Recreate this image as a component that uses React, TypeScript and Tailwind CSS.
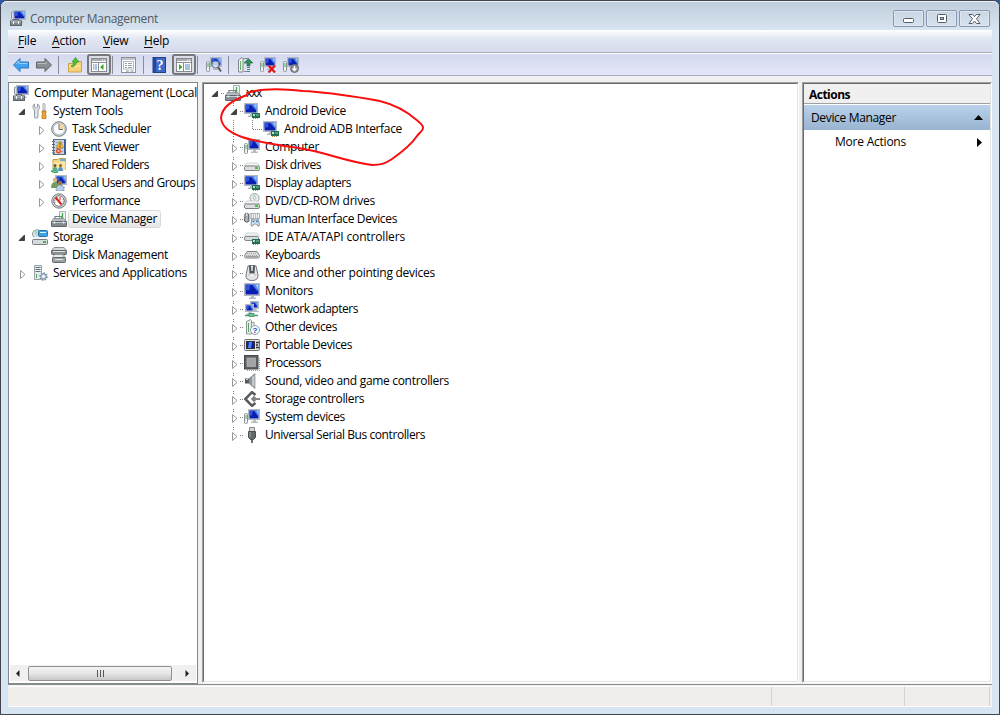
import React, { useLayoutEffect, useRef, useState } from 'react';

// Text that is letter-spaced to fill a given width
const Label = ({ text, w, className = '' }: { text: string; w: number; className?: string }) => {
  const ref = useRef<HTMLSpanElement>(null);
  const [spacing, setSpacing] = useState(0);

  useLayoutEffect(() => {
    if (!ref.current) return;
    const natural = ref.current.getBoundingClientRect().width;
    setSpacing((w - natural) / text.length);
  }, [text, w]);

  return (
    <span ref={ref} className={`whitespace-pre ${className}`} style={{ letterSpacing: spacing }}>
      {text}
    </span>
  );
};

const Svg = ({ children, size = 16 }: { children: React.ReactNode; size?: number }) => (
  <svg width={size} height={size} viewBox="0 0 16 16" className="block shrink-0">{children}</svg>
);

/* Reusable pieces */
const Screen = ({ x = 0, y = 0, w = 12, h = 9 }: { x?: number; y?: number; w?: number; h?: number }) => (
  <g>
    <rect x={x + 0.5} y={y + 0.5} width={w - 1} height={h - 1} fill="#d8dde2" stroke="#b4b9be" />
    <rect x={x + 1.5} y={y + 1.5} width={w - 3} height={h - 3} fill="#0a1fb0" />
    <path d={`M${x + 1.5} ${y + 1.5}h${w * 0.3}l-1 ${h * 0.45}h${-(w * 0.3 - 1)}z`} fill="#2c55dc" />
    <path d={`M${x + w * 0.5} ${y + 1.5}h${w * 0.5 - 1.5}v${h * 0.6}z`} fill="#4f86ee" />
    <path d={`M${x + w * 0.7} ${y + 1.5}h${w * 0.3 - 1.5}v${h * 0.4}z`} fill="#a5cdfb" />
    <path d={`M${x + w / 2 - 1} ${y + h}h3v1.500h2v1.500h-7v-1.500h2z`} fill="#b5bcc2" />
  </g>
);

const Chip = () => (
  <g>
    <rect x="8" y="10" width="8" height="5" fill="#1f6f50" />
    <rect x="9" y="11" width="2" height="2" fill="#c7ddd0" />
    <rect x="12" y="11" width="3" height="2" fill="#5d9a7c" />
    <path d="M9 15.500h6" stroke="#b98e3a" strokeDasharray="1 1" />
  </g>
);

const Tower = () => (
  <g>
    <rect x="0.500" y="4.500" width="3" height="10" rx="1" fill="#eef1f2" stroke="#8d9297" />
    <path d="M2 6v4" stroke="#43b649" />
  </g>
);

const Drive = ({ y = 7 }: { y?: number }) => (
  <g>
    <path d={`M2.500 ${y}h11l2 3H.5z`} fill="#f6f7f7" stroke="#b9bdc0" strokeWidth=".6" />
    <rect x="0.500" y={y + 3} width="15" height="4.500" rx="1.500" fill="#dcdee0" stroke="#7d8286" />
    <rect x="11" y={y + 4} width="3" height="2" fill="#38c938" />
  </g>
);

const Toolbox = () => (
  <Svg>
    <path d="M8.500.5h6v9h-6z" fill="#f5f6f7" stroke="#a7adb2" />
    <path d="M11.500 2v5" stroke="#47b349" strokeWidth="1.400" />
    <path d="M4 8V5.500h6.500V8" fill="none" stroke="#777e85" strokeWidth="1.200" />
    <path d="M2.500 7.500h10.500l2.500 3H.5z" fill="#b5bbc0" stroke="#7c848a" strokeWidth=".7" />
    <rect x="0.500" y="10.500" width="15" height="5" rx=".5" fill="#838c94" stroke="#5f676e" />
    <path d="M1 11.500h14" stroke="#c5cbd0" />
    <path d="M3.500 10.500v2M12.500 10.500v2" stroke="#e6eaec" strokeWidth="1.500" />
  </Svg>
);

const Mgmt = () => (
  <Svg>
    <path d="M1.500 9V2.500l2-1V10z" fill="#dfe3e6" stroke="#8d949b" />
    <Screen x={3} y={0} w={13} h={10} />
    <path d="M3.500 11V9.500h5V11" fill="none" stroke="#5d646b" />
    <rect x="0.500" y="11" width="11" height="4.500" fill="#7d858c" stroke="#5d646b" />
    <path d="M1 12h10" stroke="#c6ccd1" />
    <path d="M3.500 11v3M8.500 11v3" stroke="#f0f2f4" />
  </Svg>
);

const Tools = () => (
  <Svg>
    <path d="M2.500 1v3l1.500 1.500L5.500 4V1c3 1.500 2.500 5 .5 6v7.500q-2 1.500-3.500 0V7C.5 5 .5 2 2.500 1z" fill="#e4e7e9" stroke="#7d858c" strokeWidth=".8" />
    <path d="M11.500 0l1.500 1v7h-2V1z" fill="#eceeef" stroke="#8a9197" strokeWidth=".7" />
    <path d="M10 8h4v2l-.7 1 .7 1v3.500h-4V12l.7-1-.7-1z" fill="#eca533" stroke="#b8690c" strokeWidth=".7" />
  </Svg>
);

const Clock = () => (
  <Svg>
    <circle cx="8" cy="8" r="7.300" fill="#cfd4d9" stroke="#777d84" />
    <circle cx="8" cy="8" r="5.700" fill="#fbfcfd" stroke="#a5acb3" strokeWidth=".6" />
    <path d="M8 8V2.500A5.500 5.500 0 0 1 13.500 8z" fill="#f7d79d" />
    <path d="M8 3v5.500h4" fill="none" stroke="#6c737a" />
  </Svg>
);

const EventLog = () => (
  <Svg>
    <rect x="2.500" y=".5" width="12" height="15" fill="#c3d3e0" stroke="#5d7182" />
    <path d="M13 1h1.500v14H13z" fill="#3a5f9c" />
    <path d="M5 3.500h7M5 6.500h7M5 9.500h7M5 12.500h7" stroke="#8da5b8" />
    <path d="M1 2.500h3M1 5.500h3M1 8.500h3M1 11.500h3M1 14h3" stroke="#5c646d" />
    <path d="M9 2l3.500 6.500h-7z" fill="#ffc633" stroke="#c57e12" strokeWidth=".7" />
    <path d="M9 4v2.500M9 7v1" stroke="#613905" />
    <circle cx="7.500" cy="12" r="2.500" fill="#dc5222" />
    <path d="M6.500 11l2 2m0-2l-2 2" stroke="#fff" strokeWidth=".7" />
  </Svg>
);

const SharedFolder = () => (
  <Svg>
    <path d="M2 2.500h5l1-1h6.500v11H2z" fill="#f6d67a" stroke="#cba142" />
    <path d="M9 2h5v2H9z" fill="#68b2e6" />
    <path d="M2.500 5h12v8h-12z" fill="#fae6a1" />
    <circle cx="4" cy="8.500" r="1.500" fill="#7a522f" />
    <circle cx="9.500" cy="8.500" r="1.500" fill="#8f602f" />
    <path d="M1.500 14q0-4 2.500-4t2.500 4z" fill="#4fb086" />
    <path d="M7 14q0-4 2.500-4t2.500 4z" fill="#5d92c8" />
    <path d="M0 13.500q3.500 3 7 1" stroke="#29a35a" strokeWidth="1.500" fill="none" />
  </Svg>
);

const Users = () => (
  <Svg>
    <Screen x={4} y={0} w={12} h={10} />
    <circle cx="4" cy="5" r="2.300" fill="#d9b878" />
    <path d="M0 13q0-6 4-6t4 6z" fill="#6f9f5c" />
    <circle cx="9" cy="8" r="2.300" fill="#9c7448" />
    <path d="M5 16q0-6 4-6t4 6z" fill="#b9d0e9" stroke="#69829c" strokeWidth=".6" />
  </Svg>
);

const Perf = () => (
  <Svg>
    <circle cx="8" cy="8" r="7.200" fill="#d7dadd" stroke="#777b80" />
    <circle cx="8" cy="8" r="5.300" fill="#fff" stroke="#777" />
    <path d="M4 10q-1-5 4-6M12 6q1 3-1 5" fill="none" stroke="#777" strokeDasharray="1 1" />
    <path d="M4.500 4.500l6 7" stroke="#df1d1d" strokeWidth="2" />
    <path d="M9 4v3.500" stroke="#df1d1d" />
  </Svg>
);

const StorageIcon = () => (
  <Svg>
    <ellipse cx="5" cy="5" rx="4.500" ry="4.200" fill="#d7e4e8" stroke="#8b989f" />
    <path d="M5 5L1.500 2.500A4 4 0 0 1 5 1z" fill="#a9dcb4" />
    <circle cx="5" cy="5" r="1.200" fill="#fff" stroke="#8b989f" strokeWidth=".6" />
    <rect x="6.500" y="1.500" width="9" height="6" rx="1" fill="#3f9fe0" stroke="#2a73a5" />
    <path d="M8 3.500h6" stroke="#d5f1ff" />
    <path d="M2 8h12l2 3H0z" fill="#f1f3f4" />
    <rect x="0.500" y="10.500" width="15" height="5" rx="1" fill="#d7dadd" stroke="#777d82" />
    <rect x="11" y="12" width="3" height="2" fill="#38bd38" />
  </Svg>
);

const DiskMgmt = () => (
  <Svg>
    <path d="M3 .5h10l2.500 3H.5z" fill="#d5d8da" stroke="#8b9094" />
    <rect x=".5" y="3.500" width="15" height="4" rx="1" fill="#8b9093" stroke="#5f6467" />
    <path d="M2 4.500h12" stroke="#e3e5e6" />
    <path d="M3.500 7.500h9l2 3h-13z" fill="#eceded" stroke="#888d91" strokeWidth=".7" />
    <rect x="1.500" y="10.500" width="13" height="5" rx="1" fill="#9ca1a4" stroke="#63686b" />
    <path d="M4 12.500h8" stroke="#e1e3e4" />
    <rect x="11" y="8.500" width="2" height="1" fill="#5ad45a" />
  </Svg>
);

const Services = () => (
  <Svg>
    <path d="M2.500 .5h7v14h-7z" fill="#e4e9ec" stroke="#9ba3a8" />
    <path d="M3.500 2.500h5M3.500 4.500h5M3.500 6.500h5" stroke="#687784" />
    <path d="M4.500 9v4" stroke="#54a76b" />
    <circle cx="11.500" cy="11.500" r="3.300" fill="#d6e1e9" stroke="#7f97a8" strokeWidth="2" strokeDasharray="1.500 1" />
    <circle cx="11.500" cy="11.500" r="2.500" fill="#dce5eb" stroke="#7a91a2" />
    <circle cx="11.500" cy="11.500" r="1" fill="#fff" />
  </Svg>
);

const Adapter = () => <Svg><Screen x={0} y={0} w={14} h={11} /><Chip /></Svg>;
const ComputerIcon = () => <Svg><Tower /><Screen x={4} y={0} w={12} h={11} /></Svg>;
const DiskIcon = () => <Svg><Drive y={6} /></Svg>;

const Dvd = () => (
  <Svg>
    <circle cx="10.500" cy="5" r="4.500" fill="#e8ebeb" stroke="#a0a6a8" />
    <path d="M10.500 5L8 1.500l4-.8z" fill="#b9e5bd" />
    <circle cx="10.500" cy="5" r="1.300" fill="#fff" stroke="#999" strokeWidth=".6" />
    <Drive y={8} />
  </Svg>
);

const Hid = () => (
  <Svg>
    <path d="M1 3q1.500-2.500 3.500 0l.5 7q-2.200 2.500-4.500 0z" fill="#aab0b4" stroke="#555c61" />
    <path d="M2.800 1v4" stroke="#eee" />
    <path d="M6 2.500h9.500v5H6z" fill="#f2f3f4" stroke="#8d9398" strokeWidth=".7" />
    <path d="M7 4h8M7 6h8" stroke="#8a8f93" strokeDasharray="1 1" />
    <path d="M7.500 8.500q3.500 1 7 0l1 6q-1.500 2-3-1.500h-2.500q-1.500 3.500-3 1.500z" fill="#dce8f1" stroke="#687987" strokeWidth=".8" />
    <path d="M8.500 10.500h2M12 10.500h2" stroke="#2e81bf" strokeWidth="1.500" />
  </Svg>
);

const Ide = () => (
  <Svg>
    <path d="M3 4h10l2.500 3H.5z" fill="#f4f5f6" stroke="#b3b8bb" strokeWidth=".6" />
    <rect x=".5" y="7.500" width="14" height="4" rx="1.500" fill="#d9dcde" stroke="#858a8e" />
    <Chip />
  </Svg>
);

const KeyboardIcon = () => (
  <Svg>
    <path d="M3 4.500h10l2.500 4v1q0 1.500-2 1.500h-11q-2 0-2-1.500v-1z" fill="#dbddde" stroke="#7c8185" />
    <path d="M3 6.500h10M2 8.500h12" stroke="#a4a8ab" strokeDasharray="1 1" />
    <path d="M2 9.500h12" stroke="#9a9fa2" />
  </Svg>
);

const MouseIcon = () => (
  <Svg>
    <path d="M4 1q4-1.500 8 0l2 9q.5 5.500-6 5.500T2 10z" fill="#e4e5e6" stroke="#74787c" />
    <path d="M5 .5h1.500L8 5 9.500.5H11l-.5 8h-5z" fill="#4f5458" />
    <path d="M8 1v5" stroke="#e0e0e0" strokeWidth="1.500" />
    <path d="M4 10.500q4-4 8 0" fill="#f8f8f8" stroke="#9a9ea1" strokeWidth=".7" />
  </Svg>
);

const MonitorIcon = () => <Svg><Screen x={0} y={0} w={16} h={13} /></Svg>;

const Network = () => (
  <Svg>
    <Screen x={6} y={0} w={9} h={8} />
    <Screen x={1} y={3} w={9} h={8} />
    <path d="M1 14.500h13M7.500 12v2" stroke="#3aa667" strokeWidth="1.500" />
    <rect x="5" y="12.500" width="5" height="3" fill="#6fbf92" stroke="#3c8d61" strokeWidth=".7" />
  </Svg>
);

const Unknown = () => (
  <Svg>
    <path d="M2.500 2.500l4-2 1 1v13.500h-5z" fill="#e7ebec" stroke="#8e9599" />
    <path d="M4.500 4v9" stroke="#59a85b" />
    <path d="M8 4l2-1v4" fill="none" stroke="#8e9599" />
    <circle cx="11" cy="11" r="4.500" fill="#f4f8fc" stroke="#8ba0b5" />
    <text x="11" y="14" fontSize="8" fontWeight="700" textAnchor="middle" fill="#1949b0" fontFamily="Liberation Sans, sans-serif">?</text>
  </Svg>
);

const Portable = () => (
  <Svg>
    <rect x=".5" y="2.500" width="15" height="11" rx="1" fill="#e3e3e3" stroke="#6c7073" />
    <rect x="2.500" y="4.500" width="8" height="7" fill="#0a1fb0" stroke="#333" />
    <path d="M5 5h3l-1 6H4z" fill="#4f86ee" />
    <path d="M12 5.500h3M12 10.500h3" stroke="#333" strokeWidth="1.500" />
    <circle cx="13" cy="8" r="1.200" fill="#555" />
  </Svg>
);

const Cpu = () => (
  <Svg>
    <path d="M3 15.500h12.500V2" fill="none" stroke="#c59a3a" strokeWidth="1.200" strokeDasharray="1 1" />
    <rect x=".5" y=".5" width="13.500" height="13.500" fill="#5c5f61" stroke="#484b4d" />
    <rect x="3" y="3" width="8.500" height="8.500" fill="#a2a5a7" stroke="#bfc2c3" strokeWidth=".6" />
  </Svg>
);

const Sound = () => (
  <Svg>
    <path d="M1 5.500h4v5H1z" fill="#54585c" />
    <path d="M5 5.500L11 .5v15l-6-5z" fill="#8f959a" stroke="#787d81" strokeWidth=".6" />
    <path d="M8 4l2.500-2v12L8 12z" fill="#c6cacd" />
    <path d="M2 6.500h2" stroke="#ccc" />
  </Svg>
);

const StorageCtl = () => (
  <Svg>
    <path d="M11.500 4L8 1.200 1.300 8 8 14.800l3.500-2.800" fill="none" stroke="#585c5f" strokeWidth="2.600" />
    <path d="M10 4.800L13.200 8 10 11.200 6.800 8z" fill="#7c8184" />
    <path d="M9 8h7" stroke="#83888b" strokeWidth="2" />
  </Svg>
);

const Usb = () => (
  <Svg>
    <path d="M5.500.5h5v4h-5z" fill="#d5d7d8" stroke="#85898c" />
    <path d="M4.500 4.500h7v6l-2 2h-3l-2-2z" fill="#66696c" stroke="#4c4f51" />
    <path d="M6 5v5" stroke="#aaa" />
    <path d="M8 12v4" stroke="#444" strokeWidth="1.500" />
  </Svg>
);

/* Toolbar drawings */
const Arrow = ({ flip = false }: { flip?: boolean }) => (
  <Svg>
    <path
      d={flip ? 'M15.500 8L9 1.500v3.500H.5v6H9v3.500z' : 'M.5 8L7 1.500v3.500h8.500v6H7v3.500z'}
      fill={flip ? '#8d8f92' : '#43a2ee'}
      stroke={flip ? '#606366' : '#2f78bd'}
    />
    <path d={flip ? 'M1.500 6.500H10V4.500' : 'M3 7l3-3v2.500h8.500'} fill="none" stroke={flip ? '#bbbcbe' : '#91d0ff'} />
  </Svg>
);

const UpFolder = () => (
  <Svg>
    <path d="M1.500 6.500h5l1-2h7v10.500h-13z" fill="#f8d27b" stroke="#cfa24a" />
    <path d="M2.500 9h11" stroke="#fff0b5" />
    <path d="M4 9q3-1 3-4H5l3.500-4.500L12 5h-2.300Q9 9 5 10z" fill="#4cc52e" stroke="#2c8b1b" strokeWidth=".6" />
  </Svg>
);

const Pane = ({ right = false }: { right?: boolean }) => (
  <Svg>
    <rect x=".5" y="1.500" width="15" height="13" fill="#fff" stroke="#858a90" />
    <path d="M1 3h14" stroke="#a9adb2" strokeWidth="2" />
    <path d="M11 3h1M13 3h1" stroke="#fff" />
    <path d="M1 5.500h14M7.500 5.500V14" stroke="#878d94" />
    {right ? (
      <>
        <path d="M3 7v6l3.500-3z" fill="#35a91c" />
        <path d="M9 8h5M9 10h5M9 12h5" stroke="#4e84be" />
      </>
    ) : (
      <>
        <path d="M12.500 7v6L9 10z" fill="#35a91c" />
        <path d="M2 8h4M2 10h4M2 12h4" stroke="#4e84be" strokeDasharray="1 .6 3" />
      </>
    )}
  </Svg>
);

const Props = () => (
  <Svg>
    <rect x="1.500" y=".5" width="14" height="15" fill="#fff" stroke="#8c9197" />
    <path d="M2 2h13" stroke="#c1c5ca" strokeWidth="2" />
    <rect x="3.500" y="4.500" width="10" height="7.500" fill="#fff" stroke="#a5aab0" strokeWidth=".8" />
    <path d="M5 6.500h2M8 6.500h4M5 8.500h2M8 8.500h4M5 10.500h2M8 10.500h4" stroke="#7c8794" strokeWidth=".8" />
    <path d="M6 14h3M10.500 14h3" stroke="#7c8794" />
  </Svg>
);

const HelpIcon = () => (
  <Svg>
    <rect x="2" y=".5" width="12.500" height="15" fill="#4069c8" stroke="#263f89" />
    <path d="M2 1h3v14H2z" fill="#24479f" />
    <text x="9" y="13" fontSize="14" fontWeight="700" textAnchor="middle" fill="#fff" fontFamily="Liberation Serif, serif">?</text>
  </Svg>
);

const Scan = () => (
  <Svg>
    <Tower />
    <Screen x={4} y={0} w={12} h={10} />
    <circle cx="9.500" cy="7.500" r="3.500" fill="#d7ecf8" fillOpacity=".85" stroke="#707a84" />
    <path d="M12 10l3 4.500" stroke="#565e66" strokeWidth="2" />
  </Svg>
);

const UpdateDrv = () => (
  <Svg>
    <path d="M1.500 3l3.500-2.500 1 1v13.500H1.500z" fill="#f0f2f2" stroke="#7f868a" />
    <path d="M3.500 4v9" stroke="#65b267" />
    <path d="M6 1.500h5M7 14.500h3" stroke="#888f94" />
    <path d="M11.500 1.500L16 6h-3v3h-3V6H7z" fill="#2f8d5c" stroke="#22643f" strokeWidth=".6" />
    <path d="M10 10.500h3M10 12.500h3M10 14.500h3" stroke="#4b856a" />
  </Svg>
);

const Uninstall = () => (
  <Svg>
    <Tower />
    <Screen x={4} y={0} w={12} h={10} />
    <path d="M8.500 8.500l6.500 7m0-7l-6.500 7" stroke="#e01616" strokeWidth="2.200" />
  </Svg>
);

const Disable = () => (
  <Svg>
    <Tower />
    <Screen x={4} y={0} w={12} h={10} />
    <circle cx="11.500" cy="11.500" r="4" fill="#8a8e91" stroke="#6d7174" />
    <path d="M11.500 9v4.500M9.500 11.500l2 2 2-2" fill="none" stroke="#fff" strokeWidth="1.400" />
  </Svg>
);

type Expand = 'open' | 'closed' | 'none';

interface Node {
  level: number;
  text: string;
  w: number;
  icon: React.FC;
  expand: Expand;
  selected?: boolean;
}

const consoleTree: Node[] = [
  { level: 0, text: 'Computer Management (Local', w: 163, icon: Mgmt, expand: 'none' },
  { level: 1, text: 'System Tools', w: 70, icon: Tools, expand: 'open' },
  { level: 2, text: 'Task Scheduler', w: 79, icon: Clock, expand: 'closed' },
  { level: 2, text: 'Event Viewer', w: 67, icon: EventLog, expand: 'closed' },
  { level: 2, text: 'Shared Folders', w: 77, icon: SharedFolder, expand: 'closed' },
  { level: 2, text: 'Local Users and Groups', w: 123, icon: Users, expand: 'closed' },
  { level: 2, text: 'Performance', w: 68, icon: Perf, expand: 'closed' },
  { level: 2, text: 'Device Manager', w: 85, icon: Toolbox, expand: 'none', selected: true },
  { level: 1, text: 'Storage', w: 40, icon: StorageIcon, expand: 'open' },
  { level: 2, text: 'Disk Management', w: 96, icon: DiskMgmt, expand: 'none' },
  { level: 1, text: 'Services and Applications', w: 134, icon: Services, expand: 'closed' },
];

const deviceTree: Node[] = [
  { level: 0, text: 'xxx', w: 15, icon: Toolbox, expand: 'open' },
  { level: 1, text: 'Android Device', w: 81, icon: Adapter, expand: 'open' },
  { level: 2, text: 'Android ADB Interface', w: 118, icon: Adapter, expand: 'none' },
  { level: 1, text: 'Computer', w: 54, icon: ComputerIcon, expand: 'closed' },
  { level: 1, text: 'Disk drives', w: 56, icon: DiskIcon, expand: 'closed' },
  { level: 1, text: 'Display adapters', w: 86, icon: Adapter, expand: 'closed' },
  { level: 1, text: 'DVD/CD-ROM drives', w: 110, icon: Dvd, expand: 'closed' },
  { level: 1, text: 'Human Interface Devices', w: 132, icon: Hid, expand: 'closed' },
  { level: 1, text: 'IDE ATA/ATAPI controllers', w: 140, icon: Ide, expand: 'closed' },
  { level: 1, text: 'Keyboards', w: 55, icon: KeyboardIcon, expand: 'closed' },
  { level: 1, text: 'Mice and other pointing devices', w: 170, icon: MouseIcon, expand: 'closed' },
  { level: 1, text: 'Monitors', w: 48, icon: MonitorIcon, expand: 'closed' },
  { level: 1, text: 'Network adapters', w: 93, icon: Network, expand: 'closed' },
  { level: 1, text: 'Other devices', w: 72, icon: Unknown, expand: 'closed' },
  { level: 1, text: 'Portable Devices', w: 87, icon: Portable, expand: 'closed' },
  { level: 1, text: 'Processors', w: 56, icon: Cpu, expand: 'closed' },
  { level: 1, text: 'Sound, video and game controllers', w: 184, icon: Sound, expand: 'closed' },
  { level: 1, text: 'Storage controllers', w: 99, icon: StorageCtl, expand: 'closed' },
  { level: 1, text: 'System devices', w: 80, icon: ComputerIcon, expand: 'closed' },
  { level: 1, text: 'Universal Serial Bus controllers', w: 160, icon: Usb, expand: 'closed' },
];

const Expander = ({ state, lines = false, root = false }: { state: Expand; lines?: boolean; root?: boolean }) => (
  <svg width="19" height="18" viewBox="0 0 19 18" className="block shrink-0">
    {lines && !root && state !== 'none' && (
      <path d="M8.500 1v1M8.500 3v1" stroke="#777" />
    )}
    {lines && (
      <path d={state === 'none' ? 'M8.500 0v9.500H19' : 'M15 9.500h4'} fill="none" stroke="#808080" strokeDasharray="1 1" />
    )}
    {state === 'open' && <path d="M11.500 7v5.500H6z" fill="#404040" stroke="#202020" strokeWidth=".7" />}
    {state === 'closed' && <path d="M7.500 6.500v8l4.500-4z" fill="#fff" stroke="#989898" />}
  </svg>
);

const indents = ['pl-0', 'pl-[19px]', 'pl-[38px]'];
const outdents = ['pl-[4px]', 'pl-[4px]', 'pl-[23px]'];

const TreeRow = ({ node, lines = false }: { node: Node; lines?: boolean }) => {
  const Icon = node.icon;
  return (
    <div className={`flex h-[18px] items-center ${lines ? indents[node.level] : outdents[node.level]}`}>
      {lines && node.level === 2 && (
        <svg width="19" height="18" className="-ml-[19px] block shrink-0">
          <path d="M8.500 0v18" stroke="#808080" strokeDasharray="1 1" />
        </svg>
      )}
      {(lines || node.level > 0) && (
        <Expander state={node.expand} lines={lines} root={node.level === 0} />
      )}
      <Icon />
      <div
        className={`flex h-[18px] items-center ${
          node.selected
            ? 'ml-px rounded-[3px] border border-[#d9d9d9] bg-linear-to-b from-[#fafafa] to-[#e6e6e6] pl-[3px] pr-[3px]'
            : 'ml-px pl-1'
        }`}
      >
        <Label text={node.text} w={node.w} />
      </div>
    </div>
  );
};

const Sep = ({ className }: { className: string }) => <div className={`h-[18px] w-px bg-[#8b8d99] ${className}`} />;

const Pressed = ({ children, className }: { children: React.ReactNode; className: string }) => (
  <div className={`flex h-[21px] w-6 items-center justify-center rounded-[3px] border-2 border-[#75777c] bg-[#dcdee6] ${className}`}>
    {children}
  </div>
);

const CaptionButton = ({ children }: { children: React.ReactNode }) => (
  <div className="flex h-[17px] w-[31px] items-center justify-center rounded-[2px] border border-[#8995b1] bg-linear-to-b from-[#c9d6e3] to-[#d6e2ee] shadow-[inset_0_0_0_1px_#dfe8f1]">
    {children}
  </div>
);

const menus = [
  { text: 'File', first: 'F', rest: 'ile', cls: 'w-[34px]' },
  { text: 'Action', first: 'A', rest: 'ction', cls: 'w-[51px]' },
  { text: 'View', first: 'V', rest: 'iew', cls: 'w-[41px]' },
  { text: 'Help', first: 'H', rest: 'elp', cls: 'w-[40px]' },
];

export default function App() {
  return (
    <div className="h-[715px] w-[1000px] overflow-hidden bg-[#3158a5] font-['Open_Sans','Noto_Sans',sans-serif] text-[12px] leading-[18px] text-black">
      <div className="relative flex h-full w-full flex-col rounded-t-[7px] border border-[#43444b] bg-[#d7e4f2]">
        {/* Title bar */}
        <div className="flex h-[29px] shrink-0 rounded-t-[6px] border-t border-[#eef3f8] bg-linear-to-b from-[#c0cddb] to-[#d8e5f1] pl-[9px] pr-[9px]">
          <div className="mt-[8px]"><Mgmt /></div>
          <div className="ml-[4px] mt-[8px] text-[#4f5964]">
            <Label text="Computer Management" w={128} />
          </div>
          <div className="ml-auto mt-[8px] flex gap-[2px]">
            <CaptionButton>
              <svg width="13" height="9"><rect x="1.500" y="4.500" width="10" height="4" rx="1" fill="#fff" stroke="#555b66" /></svg>
            </CaptionButton>
            <CaptionButton>
              <svg width="12" height="10">
                <rect x="1.500" y=".5" width="9" height="8" rx="1" fill="#fff" stroke="#555b66" />
                <rect x="4.500" y="3.500" width="3" height="2" fill="#b8c7d6" stroke="#555b66" />
              </svg>
            </CaptionButton>
            <CaptionButton>
              <svg width="13" height="10">
                <path d="M1 .5h3.500l2 2.200 2-2.200H12L8.500 4.800 12 9.500H8.500l-2-2.500-2 2.500H1l3.500-4.700z" fill="#fff" stroke="#555b66" />
              </svg>
            </CaptionButton>
          </div>
        </div>

        <div className="mx-[7px] flex h-[677px] flex-col border-b border-white bg-[#f0f0f0]">
          {/* Menu bar */}
          <div className="flex h-[24px] shrink-0 items-center border-b border-white bg-linear-to-b from-white via-[#e3e8f3] via-35% to-[#d4daed] shadow-[inset_0_-1px_0_#a9aab0] pl-[10px]">
            {menus.map((m) => (
              <div key={m.text} className={`-mt-px tracking-[-0.2px] ${m.cls}`}>
                <span className="underline underline-offset-2">{m.first}</span>{m.rest}
              </div>
            ))}
          </div>

          {/* Toolbar */}
          <div className="flex h-[22px] shrink-0 items-center border-b border-[#a9abc2] bg-linear-to-b from-[#d5d9ed] to-[#e3e6f7]">
            <div className="ml-[5px]"><Arrow /></div>
            <div className="ml-[7px]"><Arrow flip /></div>
            <Sep className="ml-[6px]" />
            <div className="ml-[8px]"><UpFolder /></div>
            <Pressed className="ml-[4px]"><Pane /></Pressed>
            <Sep className="ml-px" />
            <div className="ml-[7px]"><Props /></div>
            <Sep className="ml-[7px]" />
            <div className="ml-[7px]"><HelpIcon /></div>
            <Pressed className="ml-[5px]"><Pane right /></Pressed>
            <Sep className="ml-px" />
            <div className="ml-[8px]"><Scan /></div>
            <Sep className="ml-[6px]" />
            <div className="ml-[8px]"><UpdateDrv /></div>
            <div className="ml-[7px]"><Uninstall /></div>
            <div className="ml-[7px]"><Disable /></div>
          </div>

          {/* Panes */}
          <div className="flex h-[608px] shrink-0 pt-[6px]">
            <div className="flex h-[602px] w-[190px] shrink-0 flex-col border border-[#828790] bg-white">
              <div className="flex-1 overflow-hidden pt-[1px]">
                {consoleTree.map((n) => (
                  <TreeRow key={n.text} node={n} />
                ))}
              </div>
              <div className="mx-px mb-[2px] flex h-[16px] items-center bg-[#f0f0f0]">
                <svg width="18" height="15"><path d="M9.500 4v7L6 7.500z" fill="#1f1f1f" /></svg>
                <div className="flex h-[15px] w-[144px] items-center justify-center gap-[2px] rounded-[2px] border border-[#929292] bg-linear-to-b from-[#f4f4f4] via-[#e5e5e5] to-[#c7c7c7]">
                  <i className="h-[7px] w-px bg-[#555]" />
                  <i className="h-[7px] w-px bg-[#555]" />
                  <i className="h-[7px] w-px bg-[#555]" />
                </div>
                <svg width="24" height="15"><path d="M13.500 4v7L17 7.500z" fill="#1f1f1f" /></svg>
              </div>
            </div>

            <div className="ml-[4px] h-[601px] w-[597px] shrink-0 border border-b-white border-l-[#a0a0a0] border-r-white border-t-[#a0a0a0]">
              <div className="h-full border border-b-[#e3e3e3] border-l-[#696969] border-r-[#e3e3e3] border-t-[#696969] bg-white pl-[2px]">
                {deviceTree.map((n) => (
                  <TreeRow key={n.text} node={n} lines />
                ))}
              </div>
            </div>

            <div className="ml-[3px] h-[601px] w-[190px] border border-b-white border-l-[#a0a0a0] border-r-white border-t-[#a0a0a0]">
              <div className="h-full border border-b-[#e3e3e3] border-l-[#696969] border-r-[#e3e3e3] border-t-[#696969] bg-white">
                <div className="flex h-[20px] items-center border-b border-[#a0a0a0] bg-[#f0f0f0] pl-[5px] pt-[2px] font-bold">
                  <Label text="Actions" w={41} />
                </div>
                <div className="mt-px flex h-[25px] items-center justify-between bg-linear-to-b from-[#b9d1ea] to-[#99b4d1] pl-[7px] pr-[7px]">
                  <Label text="Device Manager" w={85} />
                  <svg width="9" height="5"><path d="M0 5L4.500 0 9 5z" fill="#000" /></svg>
                </div>
                <div className="flex h-[24px] items-center justify-between pl-[31px] pr-[8px]">
                  <Label text="More Actions" w={71} />
                  <svg width="5" height="9"><path d="M0 0l5 4.500L0 9z" fill="#000" /></svg>
                </div>
              </div>
            </div>
          </div>

          {/* Status bar */}
          <div className="flex flex-1 border-t border-[#8b8f8b] pl-px pt-px">
            <div className="w-[763px] border-r border-[#d5d2d2] border-t border-t-white bg-[#f0edeb]" />
            <div className="w-[133px] border-r border-[#d5d2d2] border-t border-t-white bg-[#f0edeb]" />
            <div className="w-[85px] border-r border-[#d5d2d2] border-t border-t-white bg-[#f0edeb]" />
          </div>
        </div>

        {/* Hand-drawn marker loop over the Android entries */}
        <svg className="pointer-events-none absolute -left-px -top-px" width="440" height="180">
          <path
            d="M247 93C262 88 285 89 303 91C325 92 345 95 369 99C384 101 399 107 409 114C415 119 422 123 423 127C424 130 419 133 417 136C411 145 402 152 392 159C385 164 380 165 372 165C350 162 335 156 314 151C290 146 262 144 242 137C229 132 222 127 221 118C222 107 231 101 247 95"
            fill="none"
            stroke="#fb0d0d"
            strokeWidth="2"
            strokeLinecap="round"
          />
        </svg>
      </div>
    </div>
  );
}
